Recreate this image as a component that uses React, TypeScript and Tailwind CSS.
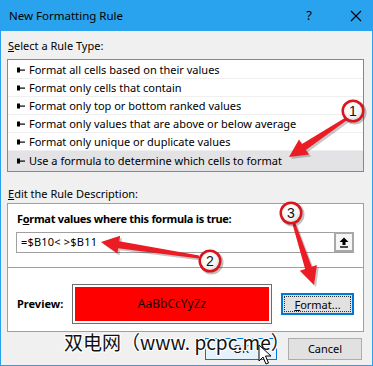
import React from 'react';

const ui = { fontFamily: '"Noto Sans", "Open Sans", sans-serif' };

const ruleTypes = [
    'Format all cells based on their values',
    'Format only cells that contain',
    'Format only top or bottom ranked values',
    'Format only values that are above or below average',
    'Format only unique or duplicate values',
    'Use a formula to determine which cells to format',
];

const Bullet = () => (
    <svg width="8" height="6" viewBox="0 0 8 6" className="shrink-0">
        <rect x="0" y="0.5" width="3" height="5" fill="#000" />
        <rect x="3" y="2.5" width="5" height="1.2" fill="#000" />
    </svg>
);

// tapering red arrow, from (x1,y1) to tip (x2,y2)
const arrowPoints = (x1: number, y1: number, x2: number, y2: number) => {
    const dx = x2 - x1;
    const dy = y2 - y1;
    const len = Math.sqrt(dx * dx + dy * dy);
    const ux = dx / len;
    const uy = dy / len;
    const nx = -uy;
    const ny = ux;
    const headLen = 18;
    const bx = x2 - ux * headLen;
    const by = y2 - uy * headLen;
    const pts = [
        [x1 + nx * 1.5, y1 + ny * 1.5],
        [bx + nx * 3.5, by + ny * 3.5],
        [bx + nx * 9, by + ny * 9],
        [x2, y2],
        [bx - nx * 9, by - ny * 9],
        [bx - nx * 3.5, by - ny * 3.5],
        [x1 - nx * 1.5, y1 - ny * 1.5],
    ];
    return pts.map((p) => `${p[0].toFixed(1)},${p[1].toFixed(1)}`).join(' ');
};

const Callout = ({ cx, cy, n }: { cx: number; cy: number; n: string }) => (
    <g>
        <circle cx={cx + 1.5} cy={cy + 1.5} r="12" fill="#000" opacity="0.25" />
        <circle cx={cx} cy={cy} r="11.5" fill="#d9141c" />
        <circle cx={cx} cy={cy} r="9" fill="url(#cg)" />
        <text x={cx} y={cy + 5} textAnchor="middle" fontSize="14" fontFamily="Liberation Sans, Arial, sans-serif" fill="#111">{n}</text>
    </g>
);

const Annotations = () => {
    const arrows = [
        [346, 119, 289, 157],
        [199, 257, 101, 242],
        [294, 224, 314, 285],
    ];
    return (
        <svg className="absolute left-0 top-0 pointer-events-none" width="373" height="366" viewBox="0 0 373 366">
            <defs>
                <radialGradient id="cg" cx="0.4" cy="0.35" r="0.7">
                    <stop offset="0" stopColor="#ffffff" />
                    <stop offset="0.7" stopColor="#f4f4f4" />
                    <stop offset="1" stopColor="#d8d8d8" />
                </radialGradient>
            </defs>
            {arrows.map((a, i) => (
                <polygon key={'s' + i} points={arrowPoints(a[0] + 2, a[1] + 2, a[2] + 2, a[3] + 2)} fill="#000" opacity="0.22" />
            ))}
            {arrows.map((a, i) => (
                <polygon key={'a' + i} points={arrowPoints(a[0], a[1], a[2], a[3])} fill="#ec1c24" />
            ))}
            <Callout cx={353} cy={111} n="1" />
            <Callout cx={210} cy={261} n="2" />
            <Callout cx={291} cy={213} n="3" />
        </svg>
    );
};

const Cursor = () => (
    <svg className="absolute left-[258px] top-[344px]" width="14" height="22" viewBox="0 0 14 22">
        <path d="M1 1 L1 17 L5 13 L8 20 L10.5 19 L7.5 12 L13 12 Z" fill="#fff" stroke="#000" strokeWidth="1" strokeLinejoin="round" />
    </svg>
);

const App = () => {
    return (
        <div className="relative w-[373px] h-[366px] overflow-hidden bg-[#f0f0f0] text-[11px] text-black" style={ui}>
            <div className="flex flex-col h-full border-x border-b border-[#2aa1ef]">
                {/* title bar */}
                <div className="h-[31px] bg-[#2aa3ef] flex items-center pl-[8px] pr-[10px] shrink-0">
                    <span className="text-[11.5px]">New Formatting Rule</span>
                    <span className="ml-auto mr-[38px] text-[13px]">?</span>
                    <svg width="12" height="12" viewBox="0 0 12 12">
                        <path d="M1 1 L11 11 M11 1 L1 11" stroke="#000" strokeWidth="1.1" />
                    </svg>
                </div>

                <div className="flex flex-col pl-[6px] pr-[8px] pt-[7px]">
                    <div className="leading-[16px] pl-[1px]"><span className="underline">S</span>elect a Rule Type:</div>

                    <div className="mt-[5px] border border-[#828790] bg-white pt-[1px] h-[113px]">
                        {ruleTypes.map((r, i) => (
                            <div
                                key={r}
                                className={
                                    i === ruleTypes.length - 1
                                        ? 'h-[20px] flex items-center gap-[4px] pl-[9px] bg-[#e3e3e6]'
                                        : 'h-[18px] flex items-center gap-[4px] pl-[9px] border-b border-[#efefef]'
                                }
                            >
                                <Bullet />
                                <span className="leading-[16px]">{r}</span>
                            </div>
                        ))}
                    </div>

                    <div className="leading-[16px] mt-[14px] pl-[1px]"><span className="underline">E</span>dit the Rule Description:</div>

                    <div className="mt-[1px] border border-[#a0a0a0] bg-white h-[129px] flex flex-col">
                        <div className="px-[8px] pr-[9px] pt-[7px] h-[64px] border-b border-[#a0a0a0]">
                            <div className="font-bold leading-[16px] pl-[1px] tracking-[-0.3px]">F<span className="underline">o</span>rmat values where this formula is true:</div>
                            <div className="mt-[5px] h-[21px] border border-[#a0a0a0] flex">
                                <div className="flex-1 flex items-center pl-[4px] tracking-[0.2px]">=$B10&lt; &gt;$B11</div>
                                <div className="w-[20px] h-[20px] -mt-[1px] -mr-[1px] border-2 border-[#a8a8a8] bg-[#f5f5f5] flex items-center justify-center">
                                    <svg width="10" height="11" viewBox="0 0 10 11">
                                        <path d="M5 0.5 L9.5 5 L6.5 5 L6.5 8 L3.5 8 L3.5 5 L0.5 5 Z" fill="#000" />
                                        <rect x="1" y="9.3" width="8" height="1.4" fill="#000" />
                                    </svg>
                                </div>
                            </div>
                        </div>
                        <div className="flex items-center flex-1 pl-[9px] pr-[9px] pt-[9px]">
                            <div className="font-bold w-[55px]">Preview:</div>
                            <div className="w-[200px] h-[40px] border border-[#6d6d6d] p-[2px]">
                                <div className="w-full h-full bg-[#ff0000] flex items-center justify-center text-[12px] text-[#1a0000]">AaBbCcYyZz</div>
                            </div>
                            <div className="ml-auto w-[73px] h-[22px] border-2 border-[#0078d7] bg-[#e1e1e1] p-[1px]">
                                <div className="w-full h-full border border-dotted border-[#333] flex items-center justify-center leading-none">
                                    <span><span className="underline">F</span>ormat...</span>
                                </div>
                            </div>
                        </div>
                    </div>

                    <div className="flex justify-end gap-[11px] mt-[6px] pr-[2px]">
                        <div className="w-[72px] h-[22px] border border-[#0078d7] bg-[#e5f1fb] flex items-center justify-center">OK</div>
                        <div className="w-[74px] h-[22px] border border-[#adadad] bg-[#e1e1e1] flex items-center justify-center">Cancel</div>
                    </div>
                </div>
            </div>

            {/* watermark */}
            <div
                className="absolute left-[64px] top-[329px] text-[19px] leading-[26px] text-[#111] whitespace-nowrap"
                style={{
                    fontFamily: '"Noto Sans CJK SC", "Noto Sans", sans-serif',
                    textShadow: '1px 0 0 #fff, -1px 0 0 #fff, 0 1px 0 #fff, 0 -1px 0 #fff, 1px 1px 0 #fff, -1px -1px 0 #fff, 1px -1px 0 #fff, -1px 1px 0 #fff',
                }}
            >
                双电网（www. pcpc.me）
            </div>

            <Annotations />
            <Cursor />
        </div>
    );
};

export default App;
